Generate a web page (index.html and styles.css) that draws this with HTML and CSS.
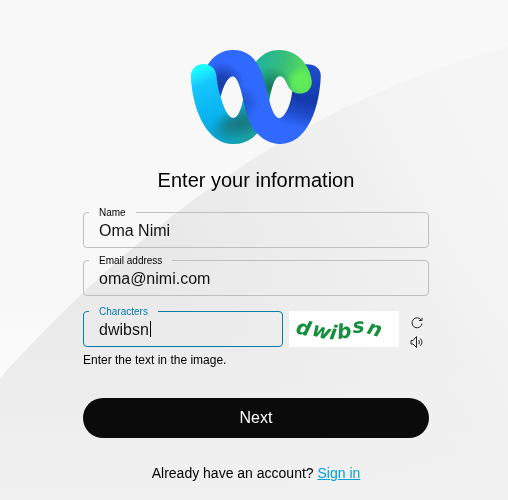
FILE: index.html
```html
<!DOCTYPE html>
<html lang="en">
<head>
<meta charset="utf-8">
<meta name="viewport" content="width=device-width, initial-scale=1">
<title>Enter your information</title>
<link rel="stylesheet" href="styles.css">
</head>
<body>
<svg class="backdrop" viewBox="0 0 508 500" preserveAspectRatio="none" aria-hidden="true">
  <defs>
    <linearGradient id="base" x1="0" y1="0" x2="0" y2="1">
      <stop offset="0" stop-color="#f8f8f8"/><stop offset=".6" stop-color="#f8f8f8"/><stop offset=".75" stop-color="#fbfbfb"/>
    </linearGradient>
    <linearGradient id="arc" gradientUnits="userSpaceOnUse" x1="150" y1="260" x2="450" y2="100">
      <stop offset="0" stop-color="#e8e8e8"/><stop offset=".5" stop-color="#eeeeee"/><stop offset="1" stop-color="#f5f5f5"/>
    </linearGradient>
    <linearGradient id="floor" x1="0" y1="0" x2="0" y2="1">
      <stop offset=".45" stop-color="#f1f1f1" stop-opacity="0"/><stop offset="1" stop-color="#f1f1f1"/>
    </linearGradient>
  </defs>
  <path fill="url(#base)" d="M0 0H508V500H0Z"/>
  <path fill="url(#arc)" d="M0 378C150 212 310 100 508 47V500H0Z"/>
  <path fill="url(#floor)" d="M0 378C150 212 310 100 508 47V500H0Z"/>
</svg>
<main class="page">
  <svg class="logo" viewBox="33 29 390 283" role="img" aria-label="Webex">
    <defs>
      <linearGradient id="right" gradientUnits="userSpaceOnUse" x1="380" y1="75" x2="320" y2="290">
        <stop offset="0" stop-color="#1e4dcc"/><stop offset=".45" stop-color="#133aab"/><stop offset=".65" stop-color="#1f4bcb"/><stop offset=".85" stop-color="#3069ff"/>
      </linearGradient>
      <linearGradient id="green" gradientUnits="userSpaceOnUse" x1="230" y1="90" x2="375" y2="120">
        <stop offset="0" stop-color="#1fb59b"/><stop offset=".5" stop-color="#38bd7b"/><stop offset="1" stop-color="#58df58"/>
      </linearGradient>
      <radialGradient id="greenShade" gradientUnits="userSpaceOnUse" cx="272" cy="142" r="65">
        <stop offset="0" stop-color="#106b58" stop-opacity=".9"/><stop offset="1" stop-color="#106b58" stop-opacity="0"/>
      </radialGradient>
      <radialGradient id="greenTip" gradientUnits="userSpaceOnUse" cx="362" cy="122" r="42">
        <stop offset="0" stop-color="#62ee58"/><stop offset=".5" stop-color="#62ee58" stop-opacity=".8"/><stop offset="1" stop-color="#62ee58" stop-opacity="0"/>
      </radialGradient>
      <radialGradient id="blueShade" gradientUnits="userSpaceOnUse" cx="125" cy="132" r="68">
        <stop offset="0" stop-color="#1a3c9f"/><stop offset=".4" stop-color="#1b40ae" stop-opacity=".85"/><stop offset="1" stop-color="#1b40ae" stop-opacity="0"/>
      </radialGradient>
      <radialGradient id="blueEdge" gradientUnits="userSpaceOnUse" cx="182" cy="190" r="58">
        <stop offset="0" stop-color="#1748b4" stop-opacity=".75"/><stop offset="1" stop-color="#1748b4" stop-opacity="0"/>
      </radialGradient>
      <linearGradient id="cyan" gradientUnits="userSpaceOnUse" x1="50" y1="85" x2="130" y2="300">
        <stop offset="0" stop-color="#1cffff"/><stop offset=".22" stop-color="#15c6fd"/><stop offset=".6" stop-color="#0ab5f1"/><stop offset="1" stop-color="#08a4d6"/>
      </linearGradient>
      <linearGradient id="tealBlend" gradientUnits="userSpaceOnUse" x1="115" y1="250" x2="205" y2="275">
        <stop offset="0" stop-color="#18a0a3" stop-opacity="0"/><stop offset="1" stop-color="#18a0a3"/>
      </linearGradient>
      <radialGradient id="tealShade" gradientUnits="userSpaceOnUse" cx="0" cy="0" r="1" gradientTransform="translate(180 248) rotate(-18) scale(98 48)">
        <stop offset="0" stop-color="#17727a" stop-opacity=".9"/><stop offset=".4" stop-color="#17727a" stop-opacity=".65"/><stop offset="1" stop-color="#17727a" stop-opacity="0"/>
      </radialGradient>
      <path id="greenShape" d="M268 182C274 145 284 108 300 108C313 108 318 125 325 139C334 155 346 160 362 160C383 160 396 145 396 124C393 82 358 29 298 29C268 29 246 41 225 68L245 145Z"/>
      <path id="blueShape" d="M81 76C99 47 125 29 158 29C197 29 219 47 235 76C254 112 257 143 268 181C275 210 286 234 298 234L307 312C258 313 229 283 213 254C197 222 192 187 187 168C181 139 170 108 158 108C144 108 128 139 122 169L96 135Z"/>
      <path id="cyanShape" d="M33 108C33 86 48 72 70 72C94 72 106 86 109 106C112 140 115 151 122 172C132 208 146 234 160 234C174 234 184 207 189 179L215 180L244 266L229 282C210 303 185 312 158 312C73 312 33 190 33 108Z"/>
    </defs>
    <path fill="url(#right)" d="M298 234C314 234 333 195 337 154L376 72C405 70 423 85 423 105C421 194 386 312 300 312L289 310Z"/>
    <use href="#greenShape" fill="url(#green)"/>
    <use href="#greenShape" fill="url(#greenTip)"/>
    <use href="#greenShape" fill="url(#greenShade)"/>
    <use href="#cyanShape" fill="url(#cyan)"/>
    <use href="#cyanShape" fill="url(#tealBlend)"/>
    <use href="#cyanShape" fill="url(#tealShade)"/>
    <use href="#blueShape" fill="#3069ff"/>
    <use href="#blueShape" fill="url(#blueShade)"/>
    <use href="#blueShape" fill="url(#blueEdge)"/>
    <path fill="url(#cyan)" d="M33 108C33 86 48 72 70 72C94 72 106 86 109 106C112 140 115 151 122 172L75 190L43 177Q33 140 33 108Z"/>
  </svg>

  <h1 class="title">Enter your information</h1>

  <form class="form">
    <fieldset class="field">
      <legend class="field-legend"><label for="name">Name</label></legend>
      <input class="field-input" id="name" type="text" value="Oma Nimi">
    </fieldset>
    <fieldset class="field">
      <legend class="field-legend"><label for="email">Email address</label></legend>
      <input class="field-input" id="email" type="email" value="oma@nimi.com">
    </fieldset>
    <div class="captcha-row">
      <fieldset class="field field-active">
        <legend class="field-legend"><label for="characters">Characters</label></legend>
        <input class="field-input" id="characters" type="text" value="dwibsn" aria-describedby="hint">
        <span class="caret" aria-hidden="true"></span>
      </fieldset>
      <svg class="captcha" viewBox="0 0 110 36">
        <g class="captcha-text">
          <text transform="translate(6 22) rotate(14)">d</text>
          <text transform="translate(22 24) rotate(16)">w</text>
          <text transform="translate(40 28) rotate(8)">i</text>
          <text transform="translate(49 28) rotate(-8)">b</text>
          <text transform="translate(64 22) rotate(-4)">s</text>
          <text transform="translate(77 22) rotate(18)">n</text>
        </g>
      </svg>
      <div class="captcha-tools">
        <button class="tool" type="button" aria-label="Refresh image">
          <svg viewBox="0 0 14 14"><path d="M11.2 4A5 5 0 1 0 12 7.6M12 1.8V4.5H9"/></svg>
        </button>
        <button class="tool" type="button" aria-label="Play audio">
          <svg viewBox="0 0 14 14"><path d="M1 5.5H3L6.5 1.5V12.5L3 9H1ZM8.8 5Q10 7 8.8 9.2M10.2 3.4Q13.8 7 10.2 10.8"/></svg>
        </button>
      </div>
    </div>
    <p class="hint" id="hint">Enter the text in the image.</p>
    <button class="next" type="submit">Next</button>
  </form>

  <p class="signin">Already have an account? <a href="#signin">Sign in</a></p>
</main>
</body>
</html>
```
FILE: styles.css
```css
* {
  box-sizing: border-box;
}

body {
  margin: 0;
  min-height: 100vh;
  background: #f8f8f8;
  color: #000;
  font-family: "Liberation Sans", Arial, sans-serif;
}

.backdrop {
  position: fixed;
  inset: 0;
  z-index: -1;
  width: 100%;
  height: 100%;
}

.page {
  display: flex;
  flex-direction: column;
  align-items: center;
  padding: 50px 16px 16px 20px;
}

.logo {
  display: block;
  width: 130px;
  height: 94px;
}

.title {
  margin: 24px 0 13px;
  font-size: 20px;
  line-height: 24px;
  font-weight: 400;
}

.form {
  display: flex;
  flex-direction: column;
  width: 100%;
  max-width: 346px;
  gap: 5px;
}

.field {
  position: relative;
  min-width: 0;
  margin: 0;
  padding: 0 5px 4px;
  border: 1px solid #bfbfbf;
  border-radius: 4px;
}

.field-active {
  flex: 1;
  border-color: #007ea8;
}

.field-legend {
  padding: 2px 10px 0;
  font-size: 10px;
  line-height: 12px;
}

.field-active .field-legend {
  color: #007ea8;
}

.field-legend label {
  display: block;
}

.field-input {
  display: block;
  width: 100%;
  height: 24px;
  padding: 0 10px;
  border: 0;
  outline: 0;
  background: transparent;
  color: #121212;
  font: 16px/24px "Liberation Sans", Arial, sans-serif;
}

.caret {
  position: absolute;
  top: 3px;
  left: 66px;
  width: 1px;
  height: 16px;
  background: #000;
}

.captcha-row {
  display: flex;
  align-items: flex-end;
  gap: 6px;
  margin-top: 3px;
}

.captcha {
  width: 110px;
  height: 36px;
  background: #fff;
}

.captcha-text {
  fill: #148f3c;
  font: italic bold 20px "DejaVu Sans", sans-serif;
}

.captcha-tools {
  display: flex;
  flex-direction: column;
  gap: 5px;
  width: 24px;
  margin-bottom: -2px;
  padding-left: 5px;
}

.tool {
  width: 14px;
  height: 14px;
  padding: 0;
  border: 0;
  background: none;
}

.tool svg {
  display: block;
  width: 14px;
  height: 14px;
  fill: none;
  stroke: #262626;
}

.hint {
  margin: 0;
  font-size: 12px;
  line-height: 16px;
}

.next {
  height: 40px;
  margin-top: 25px;
  padding: 0 16px;
  border: 0;
  border-radius: 20px;
  background: #0b0b0b;
  color: #fff;
  font: 16px/24px "Liberation Sans", Arial, sans-serif;
}

.signin {
  margin: 25px 0 0;
  font-size: 14px;
  line-height: 20px;
}

.signin a {
  color: #049fd9;
}
```
